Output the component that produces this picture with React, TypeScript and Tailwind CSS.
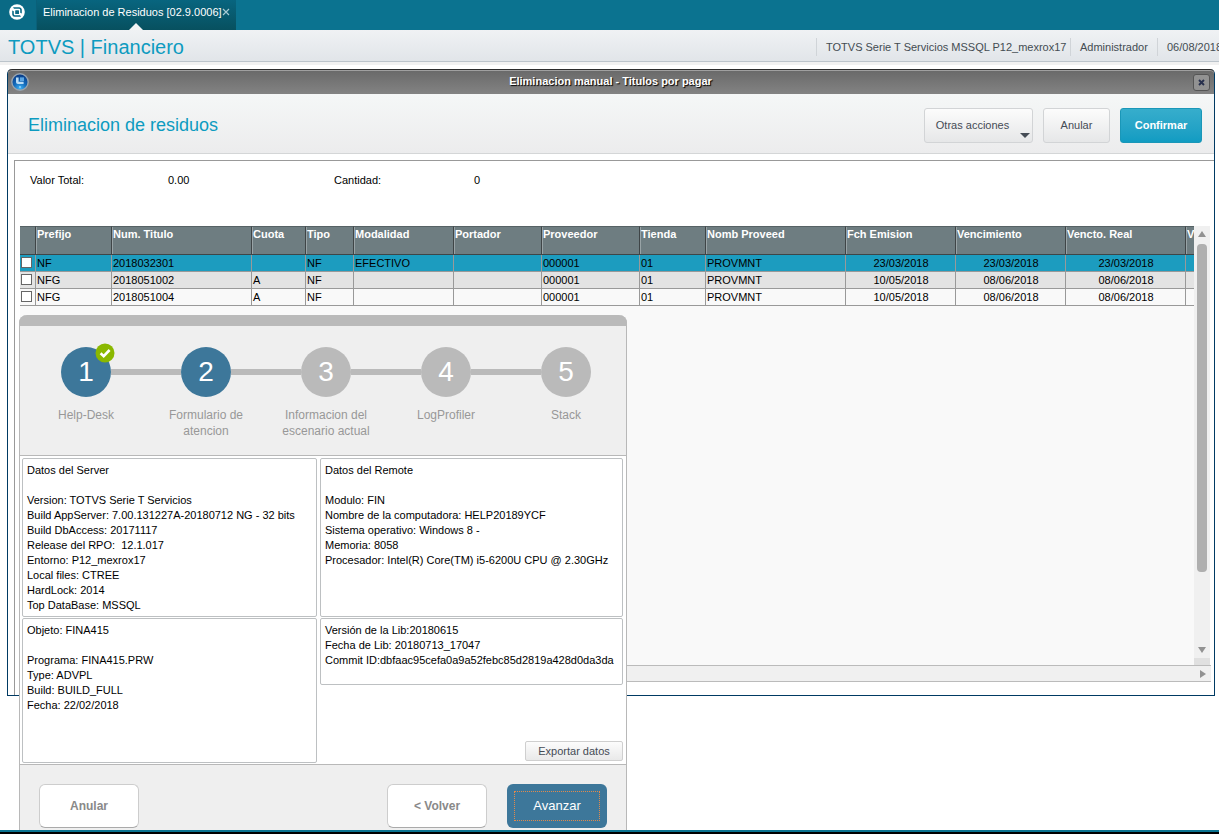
import { useState } from "react";
import clsx from "clsx";

type Column = { title: string; width: string; center?: boolean };

const columns: Column[] = [
  { title: "Prefijo", width: "w-[76px]" },
  { title: "Num. Titulo", width: "w-[140px]" },
  { title: "Cuota", width: "w-[54px]" },
  { title: "Tipo", width: "w-[48px]" },
  { title: "Modalidad", width: "w-[100px]" },
  { title: "Portador", width: "w-[88px]" },
  { title: "Proveedor", width: "w-[98px]" },
  { title: "Tienda", width: "w-[66px]" },
  { title: "Nomb Proveed", width: "w-[140px]" },
  { title: "Fch Emision", width: "w-[110px]", center: true },
  { title: "Vencimiento", width: "w-[110px]", center: true },
  { title: "Vencto. Real", width: "w-[120px]", center: true },
  { title: "V", width: "w-[100px]" }
];

const rows = [
  ["NF", "2018032301", "", "NF", "EFECTIVO", "", "000001", "01", "PROVMNT", "23/03/2018", "23/03/2018", "23/03/2018", ""],
  ["NFG", "2018051002", "A", "NF", "", "", "000001", "01", "PROVMNT", "10/05/2018", "08/06/2018", "08/06/2018", ""],
  ["NFG", "2018051004", "A", "NF", "", "", "000001", "01", "PROVMNT", "10/05/2018", "08/06/2018", "08/06/2018", ""]
];

const rowColors = ["bg-[#1c9cbf]", "bg-[#e3e3e3]", "bg-[#f9f9f9]"];

const steps = [
  "Help-Desk",
  "Formulario de atencion",
  "Informacion del escenario actual",
  "LogProfiler",
  "Stack"
];

const serverInfo = `Datos del Server

Version: TOTVS Serie T Servicios
Build AppServer: 7.00.131227A-20180712 NG - 32 bits
Build DbAccess: 20171117
Release del RPO:  12.1.017
Entorno: P12_mexrox17
Local files: CTREE
HardLock: 2014
Top DataBase: MSSQL`;

const remoteInfo = `Datos del Remote

Modulo: FIN
Nombre de la computadora: HELP20189YCF
Sistema operativo: Windows 8 -
Memoria: 8058
Procesador: Intel(R) Core(TM) i5-6200U CPU @ 2.30GHz`;

const objectInfo = `Objeto: FINA415

Programa: FINA415.PRW
Type: ADVPL
Build: BUILD_FULL
Fecha: 22/02/2018`;

const libInfo = `Versión de la Lib:20180615
Fecha de Lib: 20180713_17047
Commit ID:dbfaac95cefa0a9a52febc85d2819a428d0da3da`;

function TotvsLogo() {
  return (
    <svg viewBox="0 0 16 16" className="size-4" aria-hidden="true">
      <circle cx="8" cy="8" r="7.8" fill="#fff" />
      <path d="M4 3.2 L10.4 3.2 Q12.6 3.4 12.8 5.6 L12.8 9.6 L11.2 8.8 L11.2 6 Q11.2 4.8 10 4.8 L5 4.8 Z" fill="#0a6a85" />
      <path d="M12 12.8 L5.6 12.8 Q3.4 12.6 3.2 10.4 L3.2 6.4 L4.8 7.2 L4.8 10 Q4.8 11.2 6 11.2 L11 11.2 Z" fill="#0a6a85" />
      <rect x="6.2" y="6.2" width="3.8" height="3.8" rx="0.6" fill="#0a6a85" />
    </svg>
  );
}

function WindowIcon() {
  return (
    <svg viewBox="0 0 18 18" className="size-[18px]" aria-hidden="true">
      <defs>
        <radialGradient id="orb" cx="50%" cy="90%" r="85%">
          <stop offset="0" stopColor="#41b4f5" />
          <stop offset="0.45" stopColor="#146dbd" />
          <stop offset="1" stopColor="#083b87" />
        </radialGradient>
      </defs>
      <circle cx="9" cy="9" r="8.2" fill="url(#orb)" stroke="#98a4ae" strokeWidth="1.4" />
      <path d="M5 4.4 H7.6 V8.8 H12.6 V11 H7 Q5 11 5 9.2 Z" fill="#b9dcf6" />
      <rect x="9" y="4.4" width="4" height="3.6" fill="#5ba6e2" />
      <circle cx="9" cy="14" r="0.9" fill="#9bdcff" />
    </svg>
  );
}

function Arrow({ points }: { points: string }) {
  return (
    <svg viewBox="0 0 8 8" className="size-2" aria-hidden="true">
      <polygon points={points} fill="#929292" />
    </svg>
  );
}

function TopBar() {
  return (
    <nav className="flex h-[30px] bg-[#0b7390]">
      <a href="#inicio" aria-label="Inicio" className="flex w-[37px] items-start border-r border-[#0a6079] bg-[#0a6a85] pt-1 pl-[9px]">
        <TotvsLogo />
      </a>
      <div className="relative flex w-[199px] items-start justify-between bg-linear-to-b from-[#08657f] to-[#07505f] pt-1 pr-1.5 pl-1.5 text-[11px] leading-[17px] whitespace-nowrap text-white">
        <a href="#eliminacion">Eliminacion de Residuos [02.9.0006]</a>
        <button aria-label="Cerrar" className="flex h-[15px] items-center">
          <svg viewBox="0 0 8 8" className="size-2">
            <path d="M1 1 L7 7 M7 1 L1 7" stroke="#a9cbd4" strokeWidth="1.2" />
          </svg>
        </button>
        <svg viewBox="0 0 14 7" className="absolute bottom-0 left-[92px] h-[7px] w-3.5" aria-hidden="true">
          <polygon points="7,0 14,7 0,7" fill="#f2f4f5" />
        </svg>
      </div>
    </nav>
  );
}

function ModuleBar() {
  return (
    <header className="flex h-8 items-center overflow-hidden border-b border-[#bcc4cb] bg-linear-to-b from-[#f0f2f4] to-[#e1e5e9] pl-2">
      <h1 className="pt-[3px] text-[20px] leading-6 whitespace-nowrap text-[#0d9bc0]">TOTVS | Financiero</h1>
      <div className="ml-auto flex pt-0.5 text-[11px] leading-[18px] whitespace-nowrap text-[#444c52]">
        <span className="w-[254px] border-l border-[#d0d4d8] pl-[9px]">TOTVS Serie T Servicios MSSQL P12_mexrox17</span>
        <span className="w-[87px] border-l border-[#d0d4d8] pl-[9px]">Administrador</span>
        <span className="w-[62px] border-l border-[#d0d4d8] pl-[9px]">06/08/2018</span>
      </div>
    </header>
  );
}

function TitlesTable() {
  const [checked, setChecked] = useState([false, false, false]);

  function toggle(index: number) {
    setChecked(checked.map((value, i) => (i === index ? !value : value)));
  }

  return (
    <div className="min-w-0 flex-1 overflow-hidden bg-[#f9f9f9]">
      <table className="w-[1266px] table-fixed border-separate border-spacing-0 text-[11px] leading-4 text-black">
        <thead>
          <tr className="h-[29px] bg-[#6e7d81] text-left align-top text-white">
            <th className="w-4 border-t border-r border-b border-[#3f4547] border-t-[#566265] p-0" aria-label="Marca"></th>
            {columns.map((column) => (
              <th
                key={column.title}
                className={clsx(
                  column.width,
                  "border-t border-r border-b border-[#3f4547] border-t-[#566265] p-0 pl-px leading-[14px] font-bold shadow-[inset_1px_0_0_#98a3a6]"
                )}
              >
                {column.title}
              </th>
            ))}
          </tr>
        </thead>
        <tbody>
          {rows.map((row, rowIdx) => (
            <tr key={row[1]} className={clsx("h-[17px]", rowColors[rowIdx])}>
              <td className="border-r border-b border-[#999] p-0 align-top">
                <input
                  type="checkbox"
                  aria-label={`Marcar ${row[1]}`}
                  checked={checked[rowIdx]}
                  onChange={() => toggle(rowIdx)}
                  className="mt-0.5 ml-px block size-[11px] appearance-none border border-[#666] bg-white checked:bg-[#444]"
                />
              </td>
              {row.map((cell, i) => (
                <td
                  key={columns[i].title}
                  className={clsx(
                    "h-[17px] border-r border-b border-[#999] p-0 pl-px",
                    columns[i].center && "text-center"
                  )}
                >
                  {cell}
                </td>
              ))}
            </tr>
          ))}
        </tbody>
      </table>
    </div>
  );
}

const plainButton =
  "h-[35px] rounded-[3px] border border-[#d2d4d6] bg-linear-to-b from-[#fcfcfc] to-[#e6e7e8] text-[11px] text-[#454b55]";

function MainWindow() {
  return (
    <section className="mt-1 mr-1 mb-[134px] ml-[7px] flex flex-1 flex-col rounded-t-[5px] border border-t-0 border-[#003a63] bg-white">
      <div className="grid h-[25px] grid-cols-[1fr_auto_1fr] items-center rounded-t-[4px] border-t border-[#2c2c2c] bg-linear-to-b from-[#696969] to-[#838383] pr-1 pl-[3px] shadow-[inset_0_1px_0_#a0a0a0]">
        <WindowIcon />
        <h2 className="pb-0.5 text-[11px] leading-4 font-bold text-white [text-shadow:1px_1px_1px_#000]">
          Eliminacion manual - Titulos por pagar
        </h2>
        <button aria-label="Cerrar ventana" className="flex size-[17px] items-center justify-center justify-self-end rounded-[3px] border border-[#555] bg-[#929292]">
          <svg viewBox="0 0 7 7" className="size-[7px]">
            <path d="M1 1 L6 6 M6 1 L1 6" stroke="#28304d" strokeWidth="1.9" />
          </svg>
        </button>
      </div>

      <div className="flex h-[60px] items-center gap-2.5 border-b border-[#d4d6d7] bg-linear-to-b from-[#f5f7f7] to-[#ececed] pt-1 pr-3 pl-5">
        <h3 className="mr-auto pb-0.5 text-[18px] leading-6 text-[#0d9bc0]">Eliminacion de residuos</h3>
        <button className={clsx(plainButton, "relative w-[109px] pr-3")}>
          Otras acciones
          <svg viewBox="0 0 10 5" className="absolute right-0.5 bottom-1 h-[5px] w-2.5" aria-hidden="true">
            <polygon points="0,0 10,0 5,5" fill="#454c55" />
          </svg>
        </button>
        <button className={clsx(plainButton, "w-[67px]")}>Anular</button>
        <button className="h-[35px] w-[82px] rounded-[3px] border border-[#1a97b8] bg-linear-to-b from-[#36adcc] to-[#119cc2] text-[11px] font-bold text-white">
          Confirmar
        </button>
      </div>

      <div className="mt-1.5 ml-1.5 flex flex-1 flex-col border-t border-l border-[#999] pl-[5px] pb-[13px]">
        <dl className="flex h-[65px] pt-[11px] pl-2.5 text-[11px] leading-4 text-black">
          <dt className="w-[138px]">Valor Total:</dt>
          <dd className="w-[166px]">0.00</dd>
          <dt className="w-[140px]">Cantidad:</dt>
          <dd>0</dd>
        </dl>
        <div className="mr-1 flex flex-1">
          <TitlesTable />
          <div className="flex w-4 flex-col items-center bg-[#f0f0f0] pt-1">
            <Arrow points="4,1 8,7 0,7" />
            <div className="mt-1.5 h-[328px] w-2.5 rounded-[4px] bg-[#afafaf]"></div>
            <div className="mt-auto mb-1">
              <Arrow points="0,1 8,1 4,7" />
            </div>
            <div className="h-[7px] w-full bg-[#e0e0e0]"></div>
          </div>
        </div>
        <div className="mr-[3px] flex h-[17px] items-center justify-end border-y border-[#bbb] bg-[#f0f0f0] pr-1">
          <Arrow points="1,0 7,4 1,8" />
        </div>
      </div>
    </section>
  );
}

function InfoPanel({ text, className }: { text: string; className: string }) {
  return (
    <p className={clsx("rounded-[2px] border border-[#bdc0c2] bg-white px-1 pt-1 text-[11px] leading-[15px] whitespace-pre text-black", className)}>
      {text}
    </p>
  );
}

function Step({ label, index }: { label: string; index: number }) {
  return (
    <li className="w-[120px]">
      <div className="flex items-center">
        <span className={clsx("h-1.5 flex-1", index > 0 && "bg-[#bababa]")}></span>
        <span
          className={clsx(
            "relative flex size-[50px] items-center justify-center rounded-full text-[28px] leading-8 text-white",
            index < 2 ? "bg-[#3d779a]" : "bg-[#bababa]"
          )}
        >
          {index + 1}
          {index === 0 && (
            <svg viewBox="0 0 20 20" className="absolute -top-1 -right-1 size-5" aria-hidden="true">
              <circle cx="10" cy="10" r="9.5" fill="#8ab800" />
              <path d="M5.6 10.2 L8.7 13.2 L14.6 7" fill="none" stroke="#fff" strokeWidth="2.6" />
            </svg>
          )}
        </span>
        <span className={clsx("h-1.5 flex-1", index < steps.length - 1 && "bg-[#bababa]")}></span>
      </div>
      <p className="mx-auto mt-2.5 w-[104px] text-center text-[12px] leading-4 text-[#989898]">{label}</p>
    </li>
  );
}

function WizardDialog() {
  return (
    <div role="dialog" aria-label="Help-Desk" className="absolute top-[315px] left-[19px] w-[608px] rounded-t-lg border-x border-[#b8b8b8] bg-[#efefef]">
      <div className="-mx-px h-[11px] rounded-t-lg bg-[#bababa]"></div>
      <ol className="flex h-[129px] pt-[21px] pl-1.5">
        {steps.map((label, i) => (
          <Step key={label} label={label} index={i} />
        ))}
      </ol>

      <div className="flex h-[310px] gap-[3px] border-y border-[#b8b8b8] bg-white pt-0.5 pr-[3px] pb-px pl-0.5">
        <div className="flex w-[295px] flex-col gap-px">
          <InfoPanel text={serverInfo} className="h-[159px]" />
          <InfoPanel text={objectInfo} className="flex-1" />
        </div>
        <div className="flex flex-1 flex-col gap-px">
          <InfoPanel text={remoteInfo} className="h-[159px]" />
          <InfoPanel text={libInfo} className="h-[67px]" />
          <button className="mt-auto mb-0.5 h-5 w-[98px] self-end rounded-[2px] border border-[#cfcfcf] bg-linear-to-b from-[#fcfcfc] to-[#e9e9e9] text-[11px] leading-4 text-[#454b55]">
            Exportar datos
          </button>
        </div>
      </div>

      <div className="flex h-[65px] gap-5 pt-[19px] pr-[19px] pl-[19px]">
        <button className="mr-auto h-11 w-[100px] rounded-md border border-[#cdcdcd] border-b-[#aaa] bg-white text-[12px] font-bold text-[#898989]">
          Anular
        </button>
        <button className="h-11 w-[100px] rounded-md border border-[#cdcdcd] border-b-[#aaa] bg-white text-[12px] font-bold text-[#898989]">
          &lt; Volver
        </button>
        <button className="h-11 w-[100px] rounded-md bg-[#3d779a] p-[7px] text-[13px] text-white">
          <span className="flex h-full items-center justify-center border border-dotted border-[#e28a4c]">Avanzar</span>
        </button>
      </div>
    </div>
  );
}

function App() {
  return (
    <div className="relative flex min-h-screen flex-col overflow-hidden bg-white font-['Liberation_Sans',Arial,sans-serif]">
      <TopBar />
      <ModuleBar />
      <div className="h-[3px] bg-[#f1f1f1]"></div>
      <MainWindow />
      <WizardDialog />
      <div className="h-1 border-t-2 border-[#0b7390] bg-black"></div>
    </div>
  );
}

export default App;
